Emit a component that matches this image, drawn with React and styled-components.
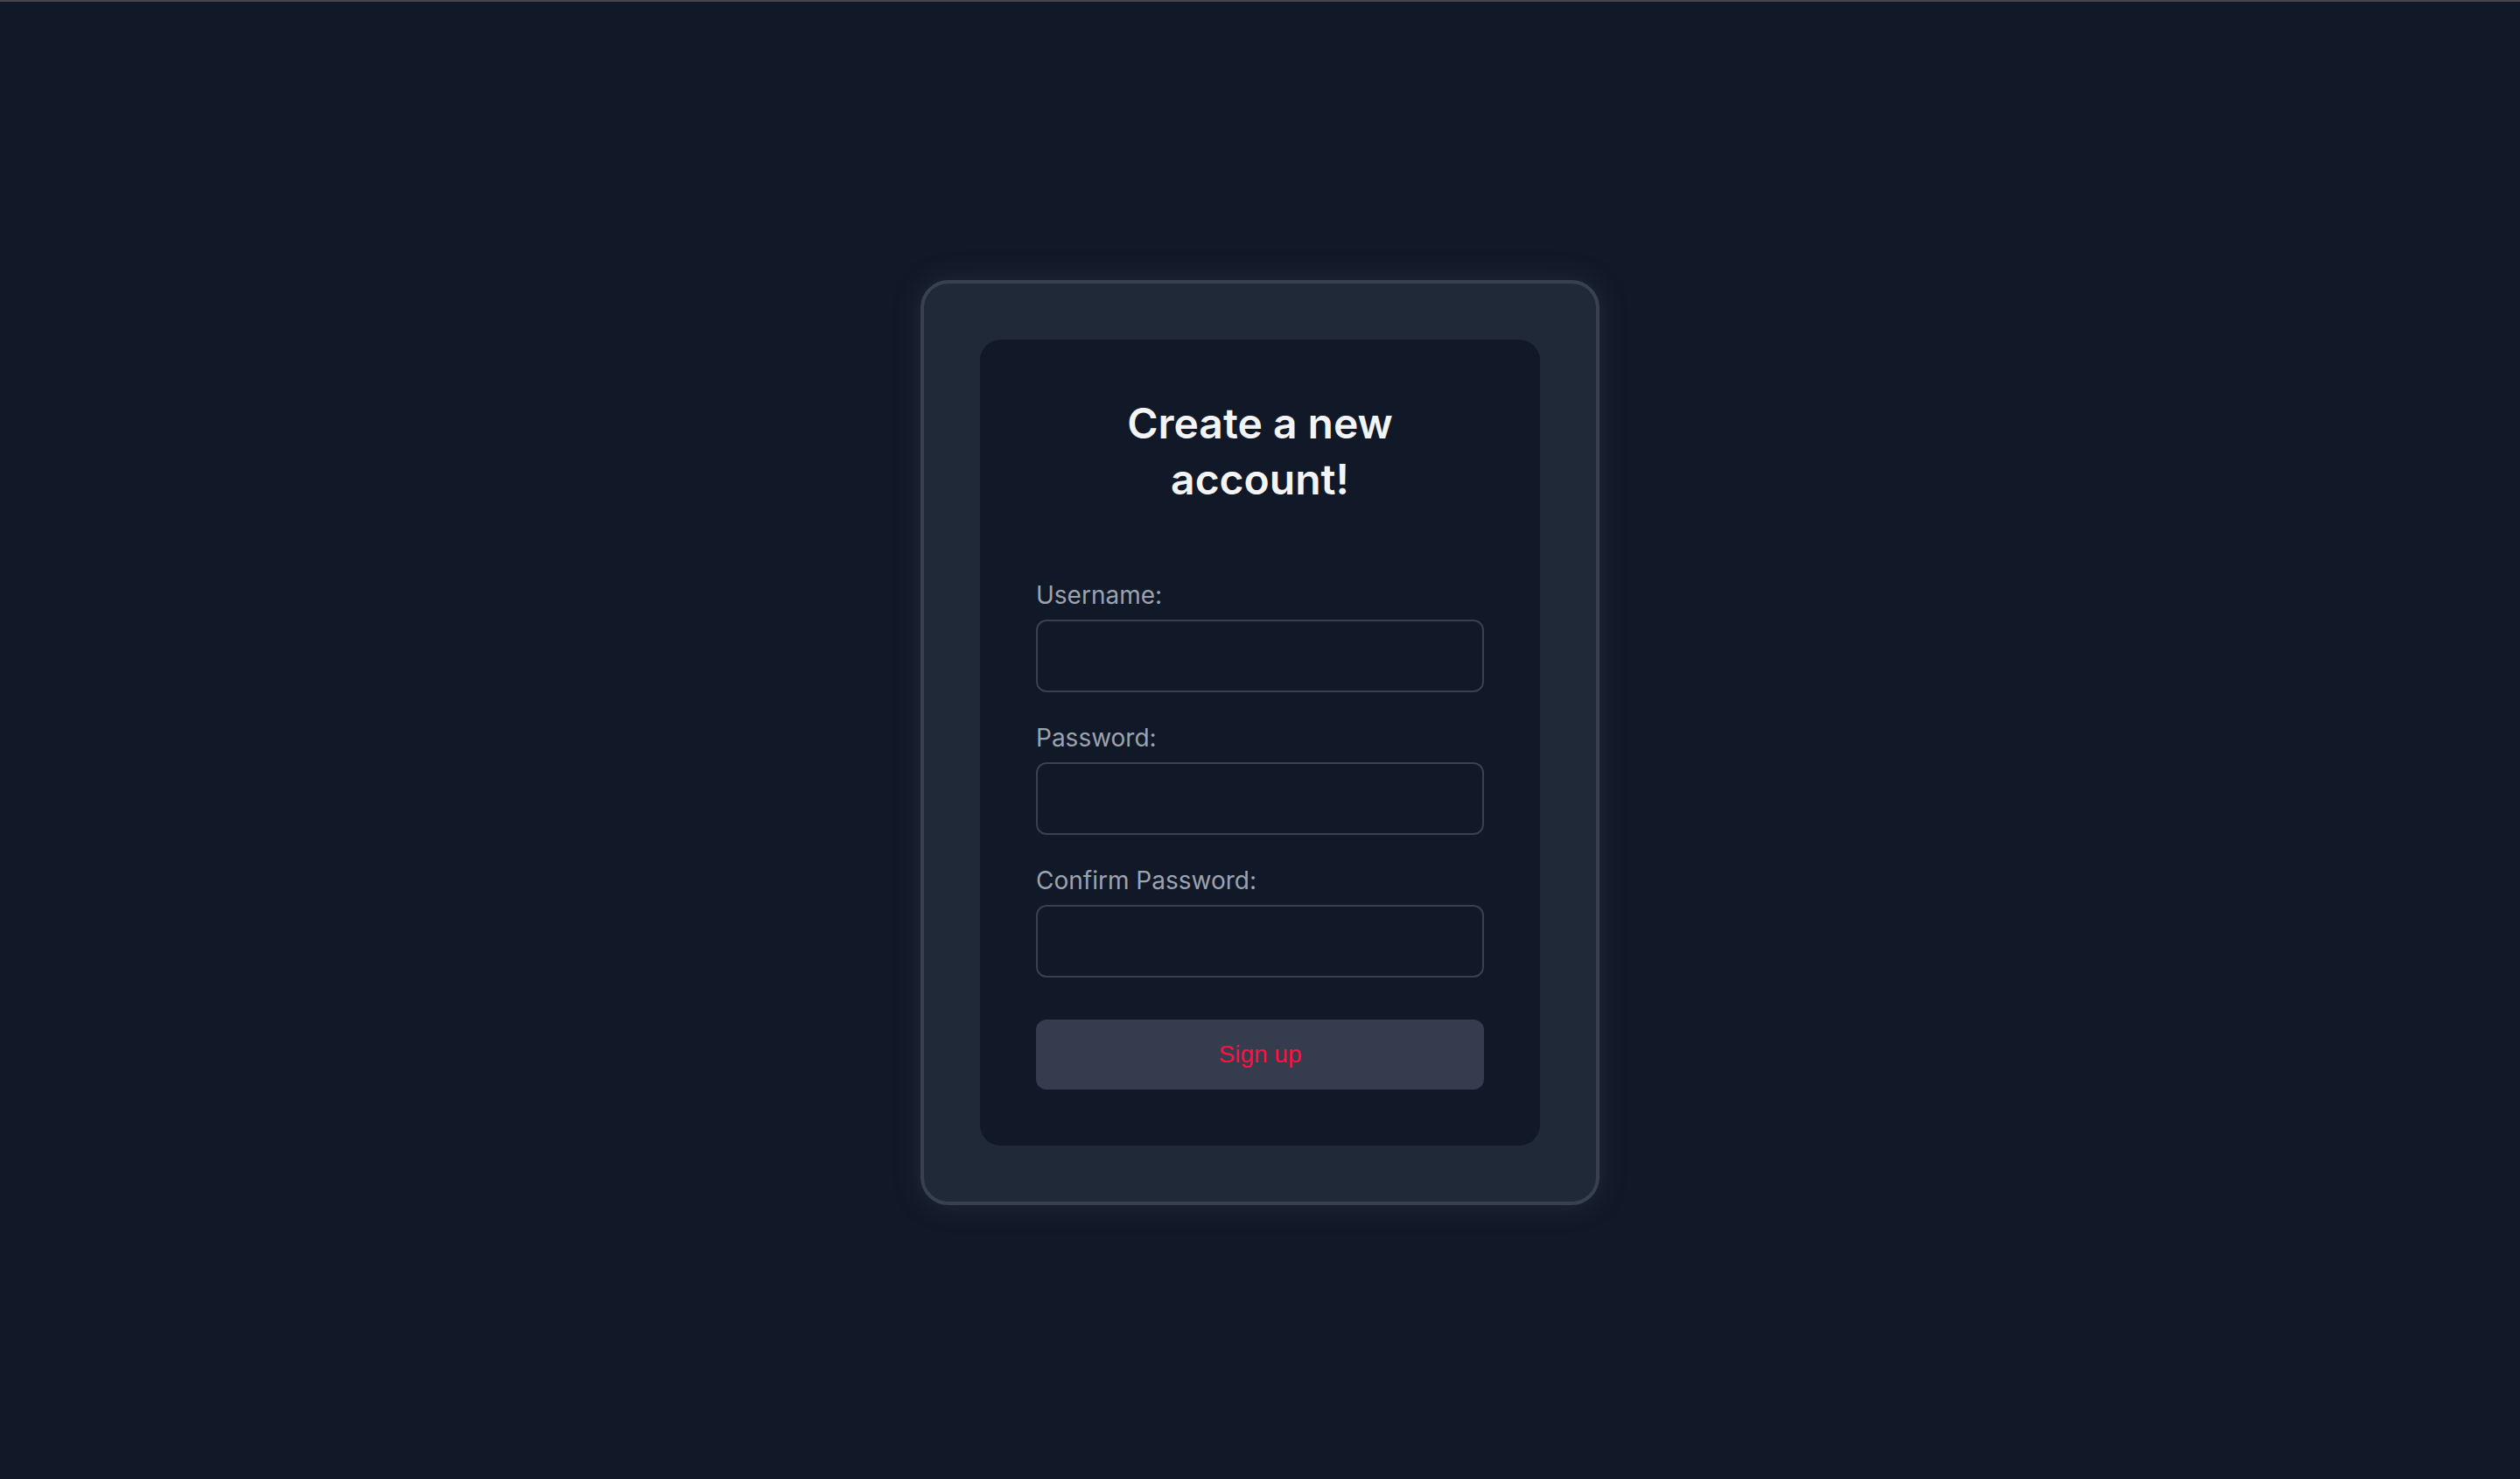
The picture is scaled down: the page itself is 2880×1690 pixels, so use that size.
import React, { useState } from 'react'
import styled, { createGlobalStyle } from 'styled-components'

const GlobalStyle = createGlobalStyle`
  * {
    box-sizing: border-box;
  }

  html, body {
    margin: 0;
    padding: 0;
    background-color: #111827;
  }
`

export default function App () {
  const [ form, setForm ] = useState({ username: '', password: '', confirm: '' })

  const update = (e) => {
    setForm({ ...form, [e.target.name]: e.target.value })
  }

  return (
    <Page>
      <GlobalStyle />
      <OuterCard>
        <InnerCard>
          <Title>Create a new account!</Title>
          <Form onSubmit={(e) => e.preventDefault()}>
            <Field>
              <Label htmlFor="username">Username:</Label>
              <Input id="username" name="username" type="text" value={form.username} onChange={update} />
            </Field>
            <Field>
              <Label htmlFor="password">Password:</Label>
              <Input id="password" name="password" type="password" value={form.password} onChange={update} />
            </Field>
            <Field>
              <Label htmlFor="confirm">Confirm Password:</Label>
              <Input id="confirm" name="confirm" type="password" value={form.confirm} onChange={update} />
            </Field>
            <SubmitButton type="submit">Sign up</SubmitButton>
          </Form>
        </InnerCard>
      </OuterCard>
    </Page>
  )
}

const Page = styled.div`
  min-height: 100vh;
  border-top: 2px solid #44474c;
  padding-top: 5px;
  display: flex;
  align-items: center;
  justify-content: center;
  font-family: Inter, "Noto Sans", sans-serif;
`

const OuterCard = styled.div`
  background-color: #1f2937;
  border: 4px solid #374151;
  border-radius: 32px;
  padding: 64px;
  box-shadow: 0 0 32px rgba(75, 85, 99, 0.3);
`

const InnerCard = styled.div`
  width: 640px;
  background-color: #111827;
  border-radius: 24px;
  padding: 64px;
  display: flex;
  flex-direction: column;
  align-items: center;
`

const Title = styled.h2`
  margin: 0 0 80px;
  max-width: 400px;
  color: #f3f4f6;
  font-size: 48px;
  font-weight: 600;
  line-height: 64px;
  text-align: center;
`

const Form = styled.form`
  width: 100%;
  display: flex;
  flex-direction: column;
  gap: 32px;
`

const Field = styled.div`
  display: flex;
  flex-direction: column;
  gap: 8px;
`

const Label = styled.label`
  color: #9ca3af;
  font-size: 28px;
  line-height: 40px;
`

const Input = styled.input`
  height: 83px;
  width: 100%;
  background-color: #111827;
  border: 2px solid #374151;
  border-radius: 12px;
  padding: 0 20px;
  color: #f3f4f6;
  font-family: Inter, sans-serif;
  font-size: 28px;
  outline: none;
`

const SubmitButton = styled.button`
  margin-top: 16px;
  height: 80px;
  width: 100%;
  background-color: #353c4e;
  border: none;
  border-radius: 12px;
  color: #ff1040;
  cursor: pointer;
  font-family: "Liberation Sans", Arial, sans-serif;
  font-size: 28px;
`
